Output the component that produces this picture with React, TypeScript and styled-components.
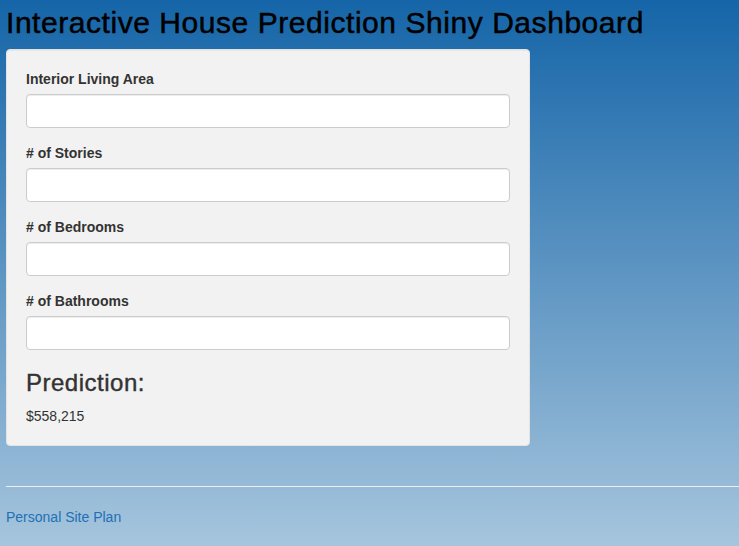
import React from "react";
import styled, { createGlobalStyle } from "styled-components";

const Global = createGlobalStyle`
  html, body { margin: 0; padding: 0; }
  body {
    min-height: 546px;
    background: linear-gradient(to bottom, #1565a8 0%, #a6c5dd 100%);
    background-attachment: fixed;
    font-family: "Liberation Sans", Arial, Helvetica, sans-serif;
    font-size: 14px;
    line-height: 20px;
    color: #333;
  }
  * { box-sizing: border-box; }
`;

const Page = styled.div`
  padding: 6px 0 0 6px;
`;

const Title = styled.h2`
  margin: 0 0 10px 0;
  font-size: 30px;
  font-weight: 400;
  line-height: 33px;
  letter-spacing: 0.55px;
  -webkit-text-stroke: 0.5px #000;
  color: #000;
`;

const Well = styled.div`
  width: 524px;
  background: #f2f2f2;
  border: 1px solid #e3e3e3;
  border-radius: 4px;
  padding: 19px;
  box-shadow: inset 0 1px 1px rgba(0, 0, 0, 0.05);
  margin-bottom: 20px;
`;

const Group = styled.div`
  margin-bottom: 15px;
  display: flex;
  flex-direction: column;
`;

const Label = styled.label`
  font-weight: 700;
  margin-bottom: 5px;
  line-height: 20px;
`;

const Input = styled.input`
  height: 34px;
  width: 100%;
  border: 1px solid #ccc;
  border-radius: 4px;
  background: #fff;
  padding: 6px 12px;
  font-size: 14px;
  font-family: inherit;
  box-shadow: inset 0 1px 1px rgba(0, 0, 0, 0.075);
`;

const Heading = styled.h3`
  margin: 20px 0 10px 0;
  font-size: 24px;
  font-weight: 400;
  line-height: 26.4px;
  letter-spacing: 0.5px;
  -webkit-text-stroke: 0.4px #333;
  color: #333;
`;

const Value = styled.div`
  line-height: 20px;
`;

const Rule = styled.hr`
  margin: 40px 0 20px 0;
  border: 0;
  border-top: 1px solid #eee;
`;

const Link = styled.a`
  color: #2170b5;
  text-decoration: none;
  line-height: 20px;
  display: block;
`;

const fields = [
  "Interior Living Area",
  "# of Stories",
  "# of Bedrooms",
  "# of Bathrooms",
];

export default function App() {
  return (
    <Page>
      <Global />
      <Title>Interactive House Prediction Shiny Dashboard</Title>
      <Well>
        {fields.map((f) => (
          <Group key={f}>
            <Label>{f}</Label>
            <Input type="text" />
          </Group>
        ))}
        <Heading>Prediction:</Heading>
        <Value>$558,215</Value>
      </Well>
      <Rule />
      <Link href="#">Personal Site Plan</Link>
    </Page>
  );
}
